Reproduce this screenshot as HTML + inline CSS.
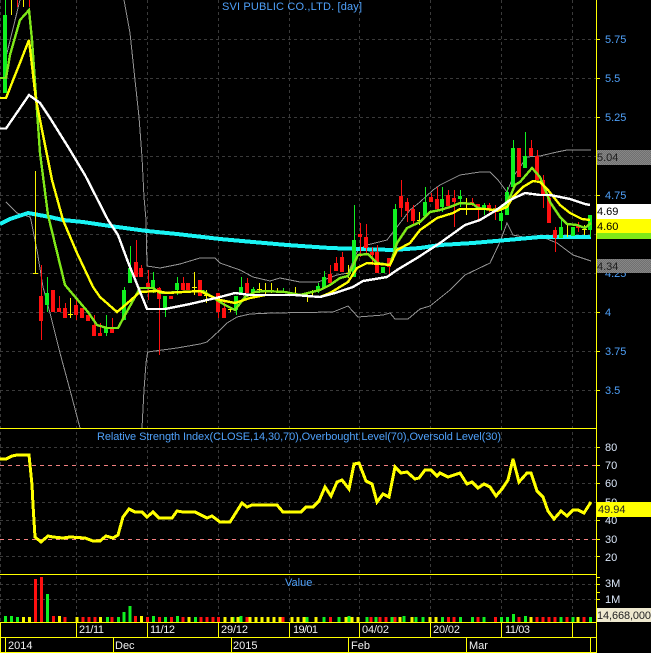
<!DOCTYPE html>
<html><head><meta charset="utf-8"><style>
html,body{margin:0;padding:0;background:#000;width:651px;height:653px;overflow:hidden}
svg{display:block}
text{font-family:"Liberation Sans",Arial,sans-serif;font-size:11px}
.b{fill:#4fa0f8}.w{fill:#f0f0f0}.k{fill:#1c1c1c}.d{fill:#dce8fa}
</style></head><body>
<svg width="651" height="653" viewBox="0 0 651 653" xmlns="http://www.w3.org/2000/svg">
<defs><pattern id="dg" width="2" height="2" patternUnits="userSpaceOnUse"><rect width="2" height="2" fill="#707070"/><rect width="1" height="1" fill="#868686"/><rect x="1" y="1" width="1" height="1" fill="#868686"/></pattern></defs>
<rect width="651" height="653" fill="#000"/>
<g shape-rendering="crispEdges" fill="none">
<path stroke="#3a3a3a" stroke-dasharray="3 3" d="M0 39.5H596M0 78.5H596M0 117.5H596M0 156.5H596M0 195.5H596M0 234.5H596M0 273.5H596M0 312.5H596M0 351.5H596M0 390.5H596M0 447.5H596M0 483.5H596M0 502.5H596M0 520.5H596M0 556.5H596M0 584.5H596M0 599.5H596"/>
<path stroke="#3a3a3a" stroke-dasharray="3 3" d="M0.5 0V622M76.5 0V622M147.5 0V622M218.5 0V622M289.5 0V622M359.5 0V622M430.5 0V622M501.5 0V622M572.5 0V622"/>
<path stroke="#f08080" stroke-dasharray="4 4" d="M0 465.5H596M0 539.5H596"/>
<polyline stroke="#929292" points="6,57 20,0"/>
<polyline stroke="#929292" points="124,0 130,33 135,80 139,117 142,157 144,197 146,220 147,266 160,268 180,264 200,258 215,258 220,263 240,270 253,277 270,281 280,278 300,282 318,282 337,275 348,273 358,250 367,245 387,240 397,227 410,210 420,202 433,190 440,185 460,175 480,172 490,172 498,180 507,192 513,177 527,157 540,156 557,152 567,150 591,150"/>
<polyline stroke="#929292" points="6,202 17,213 30,217 31,220 37,250 43,287 50,313 60,353 70,390 80,428"/>
<polyline stroke="#929292" points="142,428 144,390 146,363 147.6,352 177,348 200,344 207,342 220,330 227,323 237,317 250,314 273,313 333,312 348,306 358,317 383,315 390,313 395,319 408,319 420,309 430,306 440,298 450,290 465,275 490,263 500,242 507,223 513,235 523,237 540,236 557,243 573,255 591,261"/>
<polyline stroke="#19f4f4" stroke-width="4" points="0,224 10,219 28,213 50,217 63,220 83,222 110,226 147,231 177,234 220,239 253,242 287,245 330,248 360,249 393,250 420,248 440,245 473,243 507,240 540,237 591,237"/>
<path stroke="#ff1010" d="M17.5 0V7M29.5 0V7M41.5 265V340M59.5 296V312M65.5 303V318M76.5 298V320M94.5 315V336M100.5 323V336M112.5 318V333M136.5 240V277M141.5 265V277M148.5 270V300M159.5 287V355M183.5 277V290M218.5 293V318M224.5 300V318M247.5 278V293M330.5 265V283M336.5 257V271M342.5 252V272M360.5 223V257M366.5 224V254M372.5 247V265M377.5 245V273M389.5 258V276M401.5 180V217M407.5 198V222M413.5 205V225M431.5 193V202M437.5 187V212M448.5 190V206M454.5 190V227M472.5 198V206M478.5 205V222M489.5 203V212M495.5 205V220M519.5 148V177M531.5 140V156M537.5 150V180M543.5 175V208M549.5 195V223M555.5 227V252M578.5 222V232"/>
<path stroke="#ff1010" stroke-width="4" d="M41 296V321M53 290V312M59 308V312M65 308V318M76 305V315M82 308V318M88 315V321M94 325V336M100 333V336M112 327V333M136 262V277M141 268V277M148 283V288M159 288V299M171 296V299M183 283V290M188 283V290M200 280V296M218 293V312M224 308V318M247 283V293M301 295V296M330 274V283M336 263V271M342 257V272M360 234V237M366 237V248M372 252V255M377 252V273M389 258V267M401 196V208M407 202V211M413 209V221M431 197V202M437 199V209M448 195V206M454 198V202M472 202V204M478 204V208M489 205V209M495 208V211M519 148V177M531 148V156M537 156V180M543 180V195M549 198V223M555 230V238M578 226V228"/>
<path stroke="#10f020" d="M5.5 0V93M47.5 277V312M106.5 315V336M124.5 287V320M130.5 246V283M153.5 272V293M165.5 296V317M177.5 277V295M236.5 296V315M241.5 277V293M253.5 287V296M283.5 288V293M318.5 283V293M324.5 271V288M354.5 205V277M395.5 204V250M425.5 187V216M442.5 187V212M460.5 190V207M484.5 203V215M501.5 207V230M507.5 187V215M513.5 140V187M525.5 132V168M561.5 217V238M590.5 215V237"/>
<path stroke="#10f020" stroke-width="4" d="M5 15V93M47 293V305M106 327V333M124 290V320M130 268V283M153 280V288M165 296V308M177 283V290M236 296V310M241 287V293M253 289V293M283 291V293M318 286V291M324 277V288M354 240V277M383 267V273M395 209V250M425 202V216M442 199V207M460 196V199M484 205V210M501 213V221M507 192V215M513 148V187M525 156V168M561 227V238M573 227V236M590 215V230"/>
<path stroke="#f8f400" d="M11.5 0V15M23.5 0V7M35.5 171V273M33 273.5H38M70.5 298V318M68 314.5H73M194.5 272V295M192 287.5H197M206.5 290V303M204 295.5H209M230.5 307V312M228 309.5H233M259.5 283V293M257 289.5H262M265.5 283V295M263 291.5H268M271.5 283V293M269 290.5H274M277.5 288V293M295.5 287V296M307.5 293V302M312.5 290V296M348.5 265V278M346 273.5H351M419.5 212V225M417 220.5H422M466.5 198V215M464 208.5H469M567.5 225V237M584.5 225V235M582 229.5H587"/>
<polyline stroke="#7fe818" stroke-width="2.4" points="0,78 6,78 10,55 20,20 29,10 32,40 40,153 48,215 65,285 88,312 97,325 107,328 118,328 125,315 140,288 153,288 160,293 203,291 220,302 225,305 235,310 245,297 255,292 265,291 285,292 300,295 320,290 330,285 340,278 348,276 358,255 368,254 377,263 390,265 397,243 407,228 420,222 430,212 440,210 450,207 460,203 473,204 478,208 493,210 503,208 510,197 515,185 520,182 532,168 540,177 550,202 560,217 567,224 577,225 585,228 591,223"/>
<polyline stroke="#ffff00" stroke-width="2.4" points="0,98 6,98 29,40 36,100 44,140 52,180 63,220 77,253 93,287 100,297 117,312 123,307 140,292 157,291 167,293 183,292 200,291 208,295 220,300 235,303 250,298 265,295 295,295 320,297 330,293 348,282 357,268 367,263 380,264 390,265 397,250 410,243 420,230 437,218 453,213 460,209 487,209 497,211 507,207 513,197 523,187 533,181 540,182 548,190 560,205 570,213 582,219 590,220"/>
<polyline stroke="#ffffff" stroke-width="2.4" points="0,128.5 6,128.5 29,95 40,103 50,118 70,150 85,175 108,220 118,235 128,262 147,309 165,309 190,304 220,297 235,293 250,295 295,295 320,297 335,293 353,287 363,281 387,277 397,270 417,258 440,243 465,225 480,220 495,211 510,200 525,193 540,195 550,195 570,199 585,204 590,205"/>
<polyline stroke="#ffff00" stroke-width="3" points="0,459 6,459 12,456 17,455 29,455 32,485 33,505 35,537 41,542 48,536 53,537 63,538 70,537 85,538 93,541 100,541 106,536 113,538 118,535 123,517 129,509 135,512 142,512 147,517 153,512 159,518 172,518 177,511 183,512 195,512 207,518 212,516 220,522 230,522 242,503 247,507 252,505 277,505 283,512 301,512 306,507 313,507 319,501 325,487 331,496 337,482 342,480 349,489 354,464 359,463 366,481 372,484 377,502 383,494 389,497 395,467 401,473 407,472 415,479 419,478 425,470 431,470 437,476 440,473 448,477 460,473 467,484 472,482 478,488 484,484 490,487 496,496 502,489 508,480 513,459 519,482 527,473 531,473 537,491 543,497 548,511 554,519 561,511 567,516 573,510 578,510 584,513 591,502"/>
<path stroke="#10f020" stroke-width="3" d="M5.5 616V622M11.5 616V622M17.5 617V622M47.5 594V622M107.5 617V622M118.5 617V622M124 612V622M130 606V622M153.5 616V622M165.5 617V622M177.5 616V622M195.5 617V622M213 617V622M233 617V622M241 616V622M307 617V622M324 617V622M339 617V622M349 616V622M367 617V622M376 617V622M392 617V622M404 616V622M416 617V622M423 617V622M442.5 617V622M460.5 617V622M472.5 617V622M484 617V622M501.5 617V622M507.5 617V622M513.5 614V622M525.5 616V622M561 617V622M573 617V622M590.5 617V622"/>
<path stroke="#ff1010" stroke-width="3" d="M35.5 579V622M41.5 577V622M53.5 616V622M65 617V622M83 617V622M89 617V622M95 617V622M112 617V622M135.5 616V622M147.5 617V622M159.5 617V622M171.5 617V622M183 617V622M201 617V622M207 617V622M213 617V622M218.5 617V622M247 617V622M283 617V622M330.5 617V622M371 617V622M380 617V622M386 617V622M395 617V622M448.5 617V622M454 617V622M478 617V622M495.5 617V622M519 617V622M537 617V622M543 617V622M549 617V622M555 617V622M567 617V622M584 617V622"/>
<path stroke="#f8f400" stroke-width="3" d="M23.5 617V622M29.5 617V622M59.5 616V622M77 617V622M100.5 617V622M141.5 616V622M189 617V622M225 617V622M232 617V622M238 617V622M250 617V622M256 617V622M262 617V622M268 617V622M274 617V622M280 617V622M292 617V622M298 617V622M304 617V622M316 617V622M346 617V622M352 617V622M358 617V622M400 617V622M412 617V622M430 617V622M436 617V622M531 617V622M578 617V622"/>
<path stroke="#ffff00" d="M0 428.5H596.5M0 574.5H596.5M0 622.5H596.5M0 637.5H596.5M0 652.5H596.5M596.5 0V653M0.5 622V653M76.5 622V637M147.5 622V637M218.5 622V637M289.5 622V637M359.5 622V637M430.5 622V637M501.5 622V637M572.5 622V637M5.5 637V653M113.5 637V653M231.5 637V653M348.5 637V653M466.5 637V653M590.5 637V653"/>
<path stroke="#ffff00" d="M597 39.5H600M597 78.5H600M597 117.5H600M597 195.5H600M597 312.5H600M597 351.5H600M597 390.5H600M597 447.5H600M597 465.5H600M597 483.5H600M597 520.5H600M597 539.5H600M597 556.5H600M597 577.5H600M597 584.5H600M597 592.5H600M597 599.5H600"/>
</g>
<text class="b" x="222" y="10" textLength="140">SVI PUBLIC CO.,LTD. [day]</text>
<text class="b" x="97" y="440" textLength="404">Relative Strength Index(CLOSE,14,30,70),Overbought Level(70),Oversold Level(30)</text>
<text class="b" x="285" y="586">Value</text>
<g>
<text class="b" x="605" y="43">5.75</text><text class="b" x="605" y="82">5.5</text><text class="b" x="605" y="121">5.25</text><text class="b" x="605" y="199">4.75</text><text class="b" x="605" y="277">4.25</text><text class="b" x="605" y="316">4</text><text class="b" x="605" y="355">3.75</text><text class="b" x="605" y="394">3.5</text>
</g>
<g>
<text class="d" x="605" y="451">80</text><text class="d" x="605" y="469">70</text><text class="d" x="605" y="487">60</text><text class="d" x="605" y="506">50</text><text class="d" x="605" y="524">40</text><text class="d" x="605" y="543">30</text><text class="d" x="605" y="561">20</text><text class="d" x="605" y="587">3M</text><text class="d" x="605" y="603">1M</text>
</g>
<g shape-rendering="crispEdges">
<rect x="597" y="150" width="54" height="15" fill="url(#dg)"/>
<rect x="597" y="259" width="54" height="14" fill="url(#dg)"/>
<rect x="597" y="204" width="54" height="15" fill="#fff"/>
<rect x="597" y="233" width="54" height="6" fill="#7fe818"/>
<rect x="597" y="219" width="54" height="14" fill="#ffff00"/>
<rect x="597" y="502" width="54" height="15" fill="#ffff00"/>
<rect x="597" y="608" width="54" height="14" fill="#eee9cf"/>
</g>
<text class="k" x="597" y="161">5.04</text>
<text fill="#000" x="597" y="215">4.69</text>
<text fill="#000" x="597" y="230">4.60</text>
<text class="k" x="597" y="270">4.34</text>
<text fill="#222" x="598" y="513">49.94</text>
<text fill="#222" x="597" y="619" textLength="54">14,668,000</text>
<g>
<text class="w" x="79" y="633" textLength="25">21/11</text><text class="w" x="150" y="633" textLength="25">11/12</text><text class="w" x="221" y="633" textLength="27">29/12</text><text class="w" x="293" y="633" textLength="25">19/01</text><text class="w" x="362" y="633" textLength="27">04/02</text><text class="w" x="433" y="633" textLength="27">20/02</text><text class="w" x="505" y="633" textLength="25">11/03</text>
<text class="w" x="8" y="649">2014</text><text class="w" x="115" y="649">Dec</text><text class="w" x="233" y="649">2015</text><text class="w" x="351" y="649">Feb</text><text class="w" x="469" y="649">Mar</text>
</g>
</svg>
</body></html>
